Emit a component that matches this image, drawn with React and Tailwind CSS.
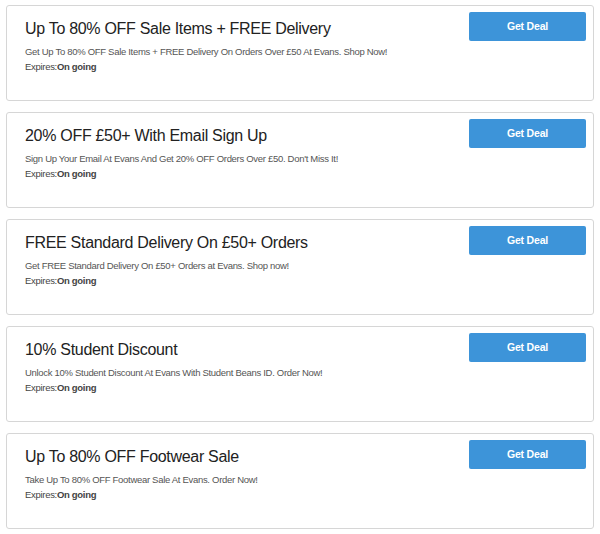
const deals = [
  {
    title: 'Up To 80% OFF Sale Items + FREE Delivery',
    desc: 'Get Up To 80% OFF Sale Items + FREE Delivery On Orders Over £50 At Evans. Shop Now!',
  },
  {
    title: '20% OFF £50+ With Email Sign Up',
    desc: "Sign Up Your Email At Evans And Get 20% OFF Orders Over £50. Don't Miss It!",
  },
  {
    title: 'FREE Standard Delivery On £50+ Orders',
    desc: 'Get FREE Standard Delivery On £50+ Orders at Evans. Shop now!',
  },
  {
    title: '10% Student Discount',
    desc: 'Unlock 10% Student Discount At Evans With Student Beans ID. Order Now!',
  },
  {
    title: 'Up To 80% OFF Footwear Sale',
    desc: 'Take Up To 80% OFF Footwear Sale At Evans. Order Now!',
  },
];

function DealCard({ deal }) {
  return (
    <div className="flex h-[96px] justify-between rounded-[3px] border border-[#d6d6d6] bg-white pl-[18px] pr-[7px] pt-[6px]">
      <div className="pt-[6px]">
        <h2 className="text-[16px] leading-[22px] tracking-[-0.3px] text-[#222]">{deal.title}</h2>
        <p className="mt-[4px] text-[9.5px] leading-[15px] tracking-[-0.3px] text-[#555]">{deal.desc}</p>
        <p className="text-[9.5px] leading-[15px] tracking-[-0.3px] text-[#444]">
          Expires:<span className="font-bold">On going</span>
        </p>
      </div>
      <button className="h-[29px] w-[117px] shrink-0 rounded-[2px] bg-[#3d94d9] text-[10.5px] font-bold tracking-[-0.2px] text-white">
        Get Deal
      </button>
    </div>
  );
}

export default function App() {
  return (
    <div
      className="min-h-[534px] bg-white px-[6px] pt-[5px]"
      style={{ fontFamily: '"Liberation Sans", Arial, sans-serif' }}
    >
      <div className="flex w-[588px] flex-col gap-[11px]">
        {deals.map((deal) => (
          <DealCard key={deal.title} deal={deal} />
        ))}
      </div>
    </div>
  );
}
